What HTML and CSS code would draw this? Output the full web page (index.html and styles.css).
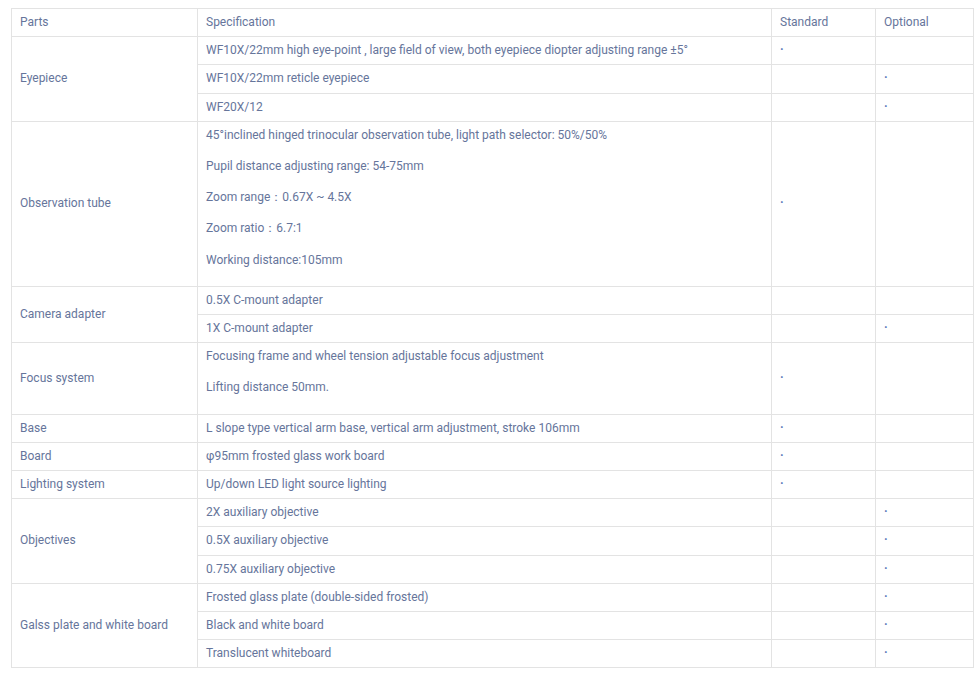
FILE: index.html
```html
<!DOCTYPE html>
<html>
<head>
<meta charset="utf-8">
<link rel="stylesheet" href="styles.css">
</head>
<body>
<table class="spec">
  <colgroup>
    <col class="c1"><col class="c2"><col class="c3"><col class="c4">
  </colgroup>
  <tr><td>Parts</td><td>Specification</td><td>Standard</td><td>Optional</td></tr>
  <tr><td rowspan="3">Eyepiece</td><td>WF10X/22mm high eye-point , large field of view, both eyepiece diopter adjusting range ±5°</td><td class="mark">·</td><td></td></tr>
  <tr><td>WF10X/22mm reticle eyepiece</td><td></td><td class="mark">·</td></tr>
  <tr><td>WF20X/12</td><td></td><td class="mark">·</td></tr>
  <tr><td>Observation tube</td><td class="multi"><p>45°inclined hinged trinocular observation tube, light path selector: 50%/50%</p><p>Pupil distance adjusting range: 54-75mm</p><p>Zoom range：0.67X ~ 4.5X</p><p>Zoom ratio：6.7:1</p><p>Working distance:105mm</p></td><td class="mark">·</td><td></td></tr>
  <tr><td rowspan="2">Camera adapter</td><td>0.5X C-mount adapter</td><td></td><td></td></tr>
  <tr><td>1X C-mount adapter</td><td></td><td class="mark">·</td></tr>
  <tr><td>Focus system</td><td class="multi"><p>Focusing frame and wheel tension adjustable focus adjustment</p><p>Lifting distance 50mm.</p></td><td class="mark">·</td><td></td></tr>
  <tr><td>Base</td><td>L slope type vertical arm base, vertical arm adjustment, stroke 106mm</td><td class="mark">·</td><td></td></tr>
  <tr><td>Board</td><td>φ95mm frosted glass work board</td><td class="mark">·</td><td></td></tr>
  <tr><td>Lighting system</td><td>Up/down LED light source lighting</td><td class="mark">·</td><td></td></tr>
  <tr><td rowspan="3">Objectives</td><td>2X auxiliary objective</td><td></td><td class="mark">·</td></tr>
  <tr><td>0.5X auxiliary objective</td><td></td><td class="mark">·</td></tr>
  <tr><td>0.75X auxiliary objective</td><td></td><td class="mark">·</td></tr>
  <tr><td rowspan="3">Galss plate and white board</td><td>Frosted glass plate (double-sided frosted)</td><td></td><td class="mark">·</td></tr>
  <tr><td>Black and white board</td><td></td><td class="mark">·</td></tr>
  <tr><td>Translucent whiteboard</td><td></td><td class="mark">·</td></tr>
</table>
</body>
</html>
```

FILE: styles.css
```css
html, body {
  margin: 0;
  padding: 0;
  background: #fff;
}
body {
  padding: 8px 0 0 11px;
  font-family: Roboto, "Liberation Sans", sans-serif;
  font-size: 12px;
  color: #66759b;
}
.spec {
  border-collapse: collapse;
  table-layout: fixed;
  width: 962px;
}
.c1 { width: 186px; }
.c2 { width: 574px; }
.c3 { width: 104px; }
.c4 { width: 98px; }
.spec td {
  border: 1px solid #e3e3e3;
  padding: 4px 8px;
  line-height: 19.2px;
  vertical-align: middle;
  text-align: left;
}
.spec td.multi p {
  margin: 0 0 12px 0;
}
.spec td.mark {
  font-weight: 700;
  color: #5b75b8;
}
```
